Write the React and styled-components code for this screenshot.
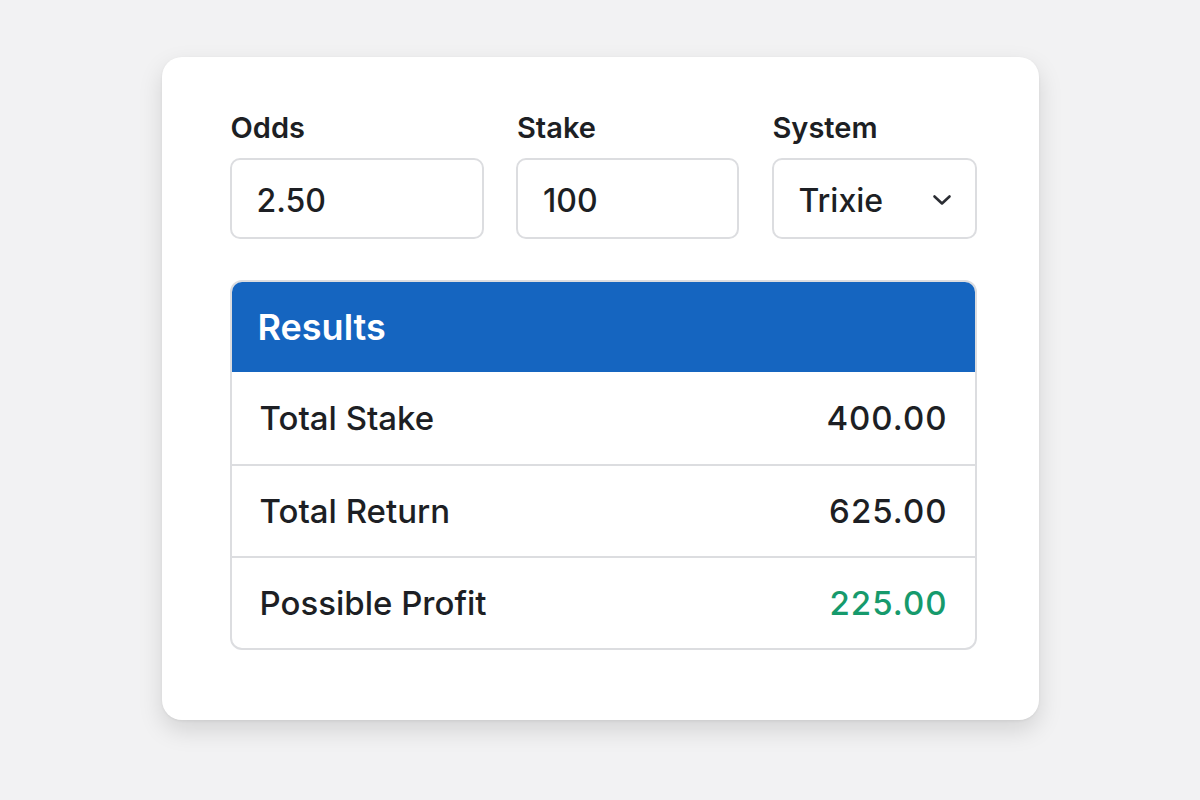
import React from "react";
import styled, { createGlobalStyle } from "styled-components";

const Global = createGlobalStyle`
  html, body { margin: 0; padding: 0; }
  body {
    background: #f2f2f3;
    font-family: Inter, "Noto Sans", "Liberation Sans", sans-serif;
    color: #1d1f24;
  }
`;

const Page = styled.div`
  width: 1200px;
  height: 800px;
  box-sizing: border-box;
  display: flex;
  justify-content: center;
  padding-top: 57px;
`;

const Card = styled.div`
  width: 877px;
  height: 663px;
  box-sizing: border-box;
  background: #ffffff;
  border-radius: 20px;
  box-shadow: 0 10px 24px rgba(0, 0, 0, 0.13), 0 1px 3px rgba(0, 0, 0, 0.06);
  padding: 54px 62px 0 68px;
  display: flex;
  flex-direction: column;
  gap: 41px;
`;

const Fields = styled.div`
  display: grid;
  grid-template-columns: 254px 223px 205px;
  column-gap: 32px;
  justify-content: space-between;
`;

const Field = styled.div`
  display: flex;
  flex-direction: column;
  gap: 13px;
`;

const Label = styled.div`
  font-size: 29px;
  font-weight: 600;
  line-height: 34px;
  padding-left: 1px;
`;

const Box = styled.div`
  height: 81px;
  box-sizing: border-box;
  border: 2px solid #dcdde0;
  border-radius: 10px;
  display: flex;
  align-items: center;
  justify-content: space-between;
  padding: 3px 23px 0 25px;
  font-size: 32px;
  font-weight: 500;
`;

const Chevron = () => (
  <svg width="20" height="12" viewBox="0 0 20 12" fill="none">
    <path d="M2.5 2.5 L10 9.5 L17.5 2.5" stroke="#2b2d33" strokeWidth="2.6" strokeLinecap="round" strokeLinejoin="round" />
  </svg>
);

const Results = styled.div`
  border: 2px solid #dcdde0;
  border-radius: 12px;
  overflow: hidden;
`;

const Header = styled.div`
  background: #1565c0;
  color: #ffffff;
  height: 90px;
  display: flex;
  align-items: center;
  padding-left: 28px;
  font-size: 36px;
  font-weight: 600;
  margin: -2px -2px 0;
  padding-top: 2px;
`;

const Row = styled.div`
  height: 92px;
  box-sizing: border-box;
  display: flex;
  align-items: center;
  justify-content: space-between;
  padding: 0 28px 0 28px;
  font-size: 33px;
  font-weight: 500;
  & + & { border-top: 2px solid #dcdde0; }
`;

const Value = styled.span`
  letter-spacing: 1px;
  margin-right: -1px;
  color: ${(p) => (p.$positive ? "#169a6c" : "#1d1f24")};
`;

const rows = [
  { label: "Total Stake", value: "400.00" },
  { label: "Total Return", value: "625.00" },
  { label: "Possible Profit", value: "225.00", positive: true },
];

export default function App() {
  return (
    <>
      <Global />
      <Page>
        <Card>
          <Fields>
            <Field>
              <Label>Odds</Label>
              <Box>2.50</Box>
            </Field>
            <Field>
              <Label>Stake</Label>
              <Box>100</Box>
            </Field>
            <Field>
              <Label>System</Label>
              <Box>
                Trixie
                <Chevron />
              </Box>
            </Field>
          </Fields>
          <Results>
            <Header>Results</Header>
            {rows.map((r) => (
              <Row key={r.label}>
                <span>{r.label}</span>
                <Value $positive={r.positive}>{r.value}</Value>
              </Row>
            ))}
          </Results>
        </Card>
      </Page>
    </>
  );
}
